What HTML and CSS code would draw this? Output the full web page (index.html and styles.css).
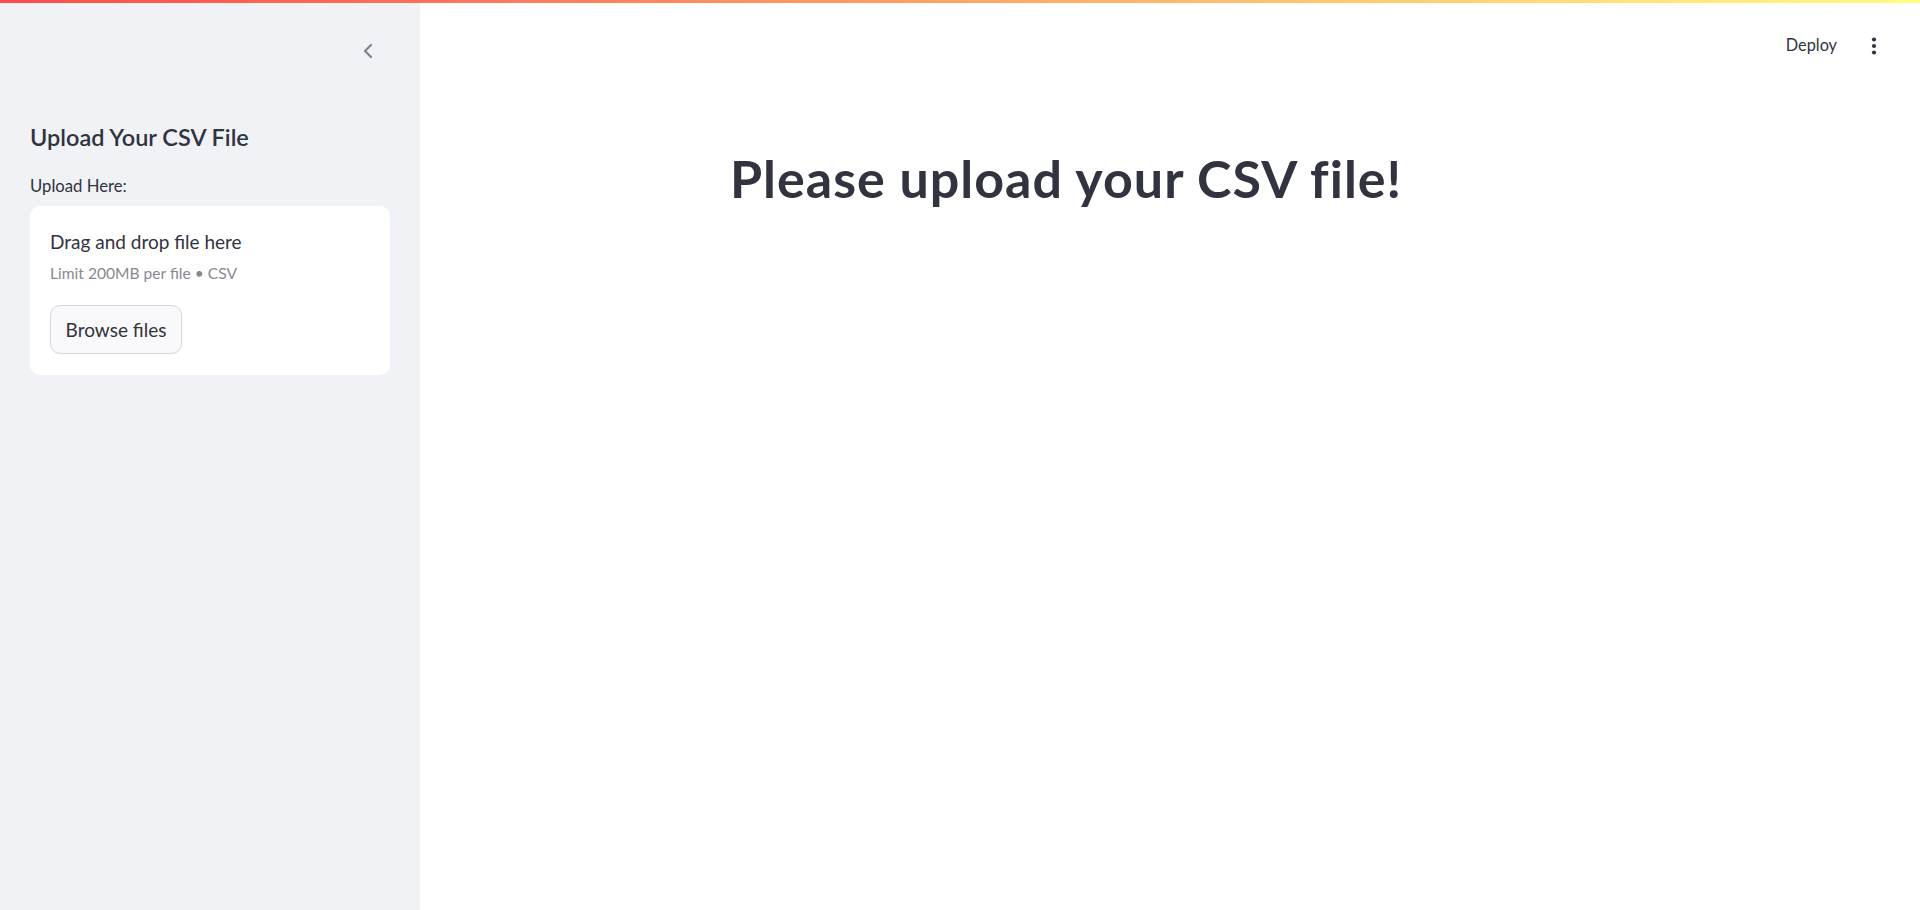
FILE: index.html
```html
<!DOCTYPE html>
<html lang="en">
<head>
<meta charset="utf-8">
<title>Upload CSV</title>
<link rel="stylesheet" href="styles.css">
</head>
<body>
<div class="decoration"></div>
<div class="app">
  <aside class="sidebar">
    <div class="sb-head">
      <button class="collapse" aria-label="Collapse sidebar">
        <svg width="12" height="16" viewBox="0 0 12 16"><path d="M9 2 L3 8 L9 14" fill="none" stroke="#7f818a" stroke-width="2.2" stroke-linecap="round" stroke-linejoin="round"/></svg>
      </button>
    </div>
    <div class="sb-body">
      <h2 class="sb-title">Upload Your CSV File</h2>
      <div class="label">Upload Here:</div>
      <div class="dropzone">
        <div class="dz-main">Drag and drop file here</div>
        <div class="dz-sub">Limit 200MB per file • CSV</div>
        <button class="browse">Browse files</button>
      </div>
    </div>
  </aside>
  <main class="main">
    <header class="topbar">
      <span class="deploy">Deploy</span>
      <button class="menu" aria-label="Main menu">
        <svg width="6" height="20" viewBox="0 0 6 20"><circle cx="3" cy="3.5" r="2.1" fill="#31333f"/><circle cx="3" cy="10" r="2.1" fill="#31333f"/><circle cx="3" cy="16.5" r="2.1" fill="#31333f"/></svg>
      </button>
    </header>
    <section class="block">
      <h1 class="title">Please upload your CSV file!</h1>
    </section>
  </main>
</div>
</body>
</html>
```

FILE: styles.css
```css
* { box-sizing: border-box; }
html, body { margin: 0; padding: 0; height: 100%; }
body {
  font-family: "Lato", "Liberation Sans", sans-serif;
  color: #31333f;
  background: #ffffff;
  overflow: hidden;
}
.decoration {
  position: absolute;
  top: 0; left: 0; right: 0;
  height: 3px;
  background: linear-gradient(90deg, #ff4b4b, #fffd80);
  z-index: 10;
}
.app {
  display: flex;
  height: 910px;
}
.sidebar {
  width: 420px;
  flex: 0 0 420px;
  background: #f0f2f6;
  display: flex;
  flex-direction: column;
}
.sb-head {
  height: 100px;
  display: flex;
  justify-content: flex-end;
  align-items: flex-start;
  padding: 43px 46px 0 0;
}
.collapse {
  border: 0;
  background: transparent;
  padding: 0;
  width: 12px;
  height: 16px;
  display: flex;
}
.sb-body {
  padding: 0 30px;
}
.sb-title {
  margin: 22px 0 0;
  font-size: 23.5px;
  line-height: 30px;
  font-weight: 600;
}
.label {
  margin-top: 23px;
  font-size: 16.7px;
  line-height: 22px;
}
.dropzone {
  margin-top: 9px;
  background: #ffffff;
  border-radius: 10px;
  padding: 23px 20px 21px;
  display: flex;
  flex-direction: column;
  align-items: flex-start;
}
.dz-main {
  font-size: 19px;
  line-height: 26px;
}
.dz-sub {
  margin-top: 7px;
  font-size: 15.6px;
  line-height: 22px;
  color: #878990;
}
.browse {
  margin-top: 21px;
  height: 49px;
  width: 132px;
  border: 1px solid #d5d6d9;
  border-radius: 10px;
  background: #f9f9fb;
  font-family: inherit;
  font-size: 19px;
  color: #31333f;
  padding: 0;
}
.main {
  flex: 1;
  display: flex;
  flex-direction: column;
}
.topbar {
  height: 75px;
  display: flex;
  justify-content: flex-end;
  align-items: flex-start;
  padding: 34px 43px 0 0;
  gap: 34px;
}
.deploy {
  font-size: 16.3px;
  line-height: 22px;
}
.menu {
  border: 0;
  background: transparent;
  padding: 0;
  display: flex;
  margin-top: 2px;
}
.block {
  width: 920px;
  margin: 0 auto;
  padding: 73px 20px 0;
}
.title {
  margin: 0;
  font-size: 52px;
  line-height: 60px;
  font-weight: 700;
  letter-spacing: 1px;
}
```
